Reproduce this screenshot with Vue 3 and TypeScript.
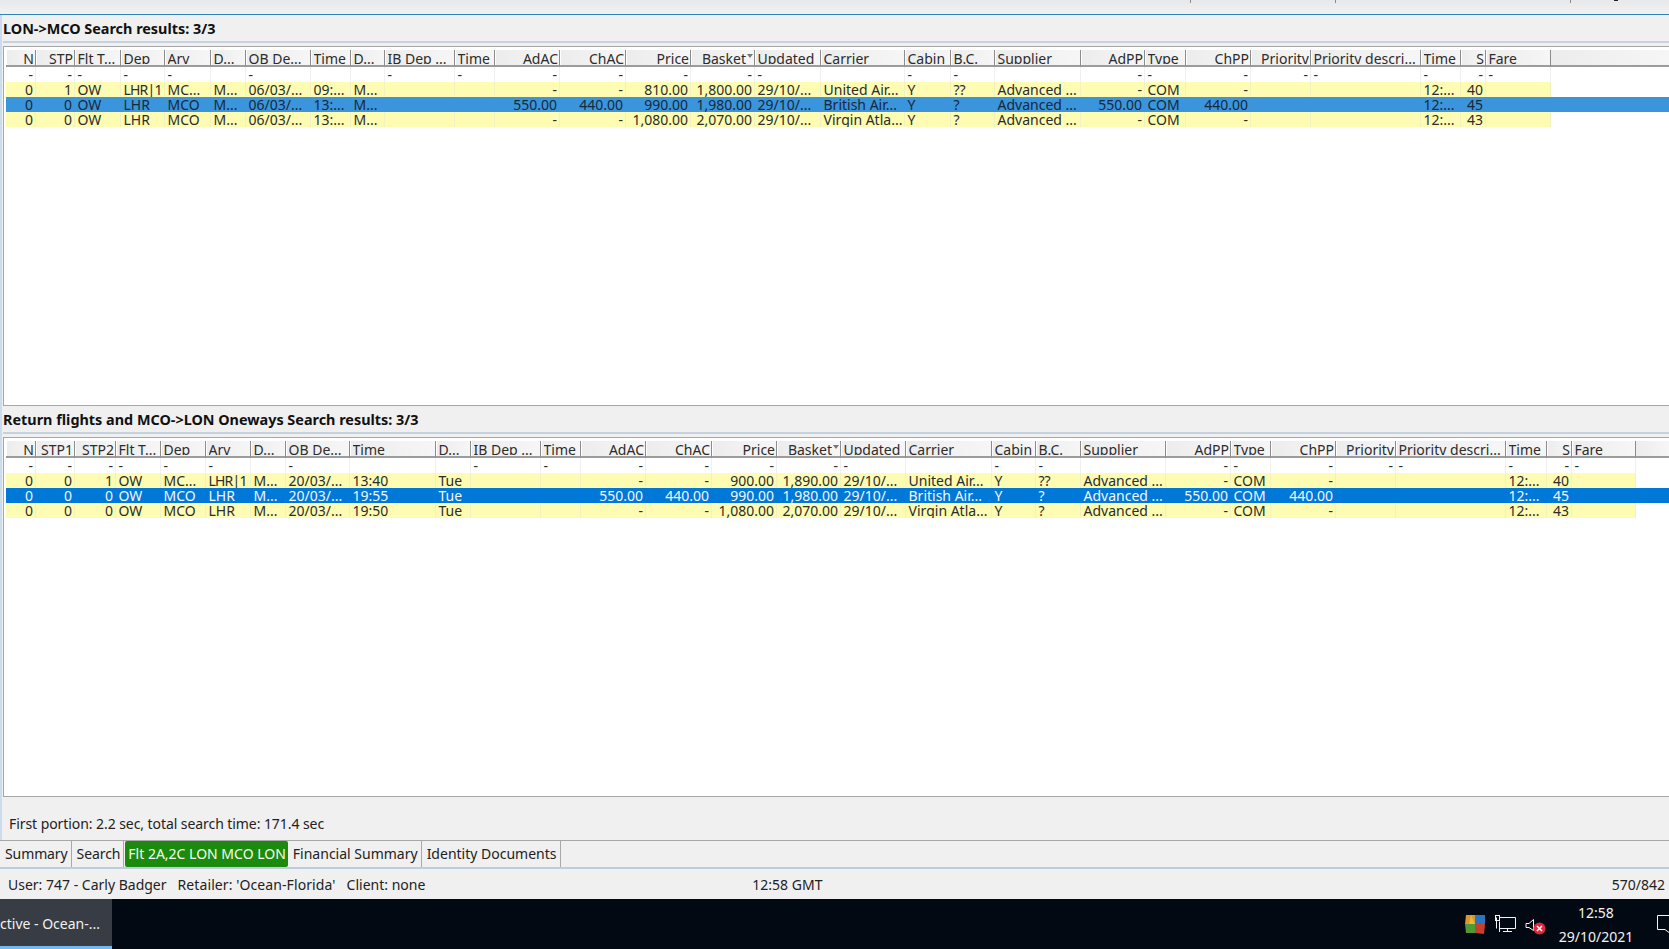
<script setup lang="ts">
type Col = { label: string; right?: boolean; sort?: boolean };

const R = true;
const tailCols: Col[] = [
  { label: 'Flt T...' }, { label: 'Dep' }, { label: 'Arv' }, { label: 'D...' }, { label: 'OB De...' },
  { label: 'Time' }, { label: 'D...' }, { label: 'IB Dep ...' }, { label: 'Time' },
  { label: 'AdAC', right: R }, { label: 'ChAC', right: R }, { label: 'Price', right: R },
  { label: 'Basket', right: R, sort: true }, { label: 'Updated' }, { label: 'Carrier' }, { label: 'Cabin' },
  { label: 'B.C.' }, { label: 'Supplier' }, { label: 'AdPP', right: R }, { label: 'Type' },
  { label: 'ChPP', right: R }, { label: 'Priority', right: R }, { label: 'Priority descri...' },
  { label: 'Time' }, { label: 'S', right: R }, { label: 'Fare' },
];

const filterTail = ['-', '-', '-', '', '-', '', '', '-', '-', '-', '-', '-', '-', '-', '', '-', '-', '', '-', '-', '-', '-', '-', '-', '-', '-'];

function widths(edges: number[]): string {
  return edges.slice(1).map((e, i) => `${e - edges[i]}px`).join(' ') + ' 1fr';
}

const tables = [
  {
    title: 'LON->MCO Search results: 3/3',
    tone: 'inactive',
    tpl: widths([6, 36, 75, 121, 165, 211, 246, 311, 351, 385, 455, 495, 560, 626, 691, 755, 821, 905, 951, 995, 1081, 1145, 1186, 1251, 1311, 1421, 1461, 1486, 1551]),
    cols: [{ label: 'N', right: R }, { label: 'STP', right: R }, ...tailCols] as Col[],
    filter: ['-', '-', ...filterTail],
    selected: 1,
    rows: [
      ['0', '1', 'OW', 'LHR|1', 'MC...', 'M...', '06/03/...', '09:...', 'M...', '', '', '-', '-', '810.00', '1,800.00', '29/10/...', 'United Air...', 'Y', '??', 'Advanced ...', '-', 'COM', '-', '', '', '12:...', '40', ''],
      ['0', '0', 'OW', 'LHR', 'MCO', 'M...', '06/03/...', '13:...', 'M...', '', '', '550.00', '440.00', '990.00', '1,980.00', '29/10/...', 'British Air...', 'Y', '?', 'Advanced ...', '550.00', 'COM', '440.00', '', '', '12:...', '45', ''],
      ['0', '0', 'OW', 'LHR', 'MCO', 'M...', '06/03/...', '13:...', 'M...', '', '', '-', '-', '1,080.00', '2,070.00', '29/10/...', 'Virgin Atla...', 'Y', '?', 'Advanced ...', '-', 'COM', '-', '', '', '12:...', '43', ''],
    ],
  },
  {
    title: 'Return flights and MCO->LON Oneways Search results: 3/3',
    tone: 'active',
    tpl: widths([6, 36, 75, 116, 161, 206, 251, 286, 350, 436, 471, 541, 581, 646, 712, 777, 841, 906, 992, 1036, 1081, 1166, 1231, 1271, 1336, 1396, 1506, 1547, 1572, 1636]),
    cols: [{ label: 'N', right: R }, { label: 'STP1', right: R }, { label: 'STP2', right: R }, ...tailCols] as Col[],
    filter: ['-', '-', '-', ...filterTail],
    selected: 1,
    rows: [
      ['0', '0', '1', 'OW', 'MC...', 'LHR|1', 'M...', '20/03/...', '13:40', 'Tue', '', '', '-', '-', '900.00', '1,890.00', '29/10/...', 'United Air...', 'Y', '??', 'Advanced ...', '-', 'COM', '-', '', '', '12:...', '40', ''],
      ['0', '0', '0', 'OW', 'MCO', 'LHR', 'M...', '20/03/...', '19:55', 'Tue', '', '', '550.00', '440.00', '990.00', '1,980.00', '29/10/...', 'British Air...', 'Y', '?', 'Advanced ...', '550.00', 'COM', '440.00', '', '', '12:...', '45', ''],
      ['0', '0', '0', 'OW', 'MCO', 'LHR', 'M...', '20/03/...', '19:50', 'Tue', '', '', '-', '-', '1,080.00', '2,070.00', '29/10/...', 'Virgin Atla...', 'Y', '?', 'Advanced ...', '-', 'COM', '-', '', '', '12:...', '43', ''],
    ],
  },
];

const tabs = [
  { label: 'Summary' },
  { label: 'Search' },
  { label: 'Flt 2A,2C LON MCO LON', on: true },
  { label: 'Financial Summary' },
  { label: 'Identity Documents' },
];
</script>

<template>
  <div class="page">
    <header class="topbar">
      <i class="tick t1"></i>
      <i class="tick t2"></i>
      <i class="tick t3"></i>
      <i class="tick dark"></i>
    </header>

    <main class="main">
      <section v-for="t in tables" :key="t.title" class="panel">
        <h2 class="heading">{{ t.title }}</h2>
        <div class="rule"></div>
        <div class="box">
          <div class="grid-row head" :style="{ gridTemplateColumns: t.tpl }">
            <div v-for="(c, i) in t.cols" :key="i" class="hcell" :class="{ right: c.right }">
              <div class="hlabel">{{ c.label }}<span v-if="c.sort" class="caret"></span></div>
            </div>
            <div class="hfill"></div>
          </div>
          <div class="grid-row filter" :style="{ gridTemplateColumns: t.tpl }">
            <div v-for="(v, i) in t.filter" :key="i" class="cell" :class="{ right: t.cols[i].right }">{{ v }}</div>
            <div class="fill"></div>
          </div>
          <div
            v-for="(r, ri) in t.rows"
            :key="ri"
            class="grid-row data"
            :class="ri === t.selected ? t.tone : 'plain'"
            :style="{ gridTemplateColumns: t.tpl }"
          >
            <div
              v-for="(v, i) in r"
              :key="i"
              class="cell"
              :class="{ right: t.cols[i].right, tight: v.includes('|') }"
            >{{ v }}</div>
            <div class="fill"></div>
          </div>
        </div>
      </section>

      <p class="timing">First portion: 2.2 sec, total search time: 171.4 sec</p>
    </main>

    <nav class="tabs">
      <div v-for="tab in tabs" :key="tab.label" class="tab" :class="{ on: tab.on }">{{ tab.label }}</div>
    </nav>

    <footer class="status">
      <span class="user">User: 747 - Carly Badger</span>
      <span class="retailer">Retailer: 'Ocean-Florida'</span>
      <span class="client">Client: none</span>
      <span class="gmt">12:58 GMT</span>
      <span class="mem">570/842</span>
    </footer>

    <div class="taskbar">
      <div class="task">ctive - Ocean-...</div>
      <div class="tray">
        <svg class="ti" width="20" height="20" viewBox="0 0 20 20">
          <path d="M1 1h9v9H0z" fill="#d8982c" />
          <path d="M10 1h10v9H10z" fill="#2c74c0" />
          <path d="M0 10h10v9H1z" fill="#4e9a34" />
          <path d="M10 10h10l-1 10-9-1z" fill="#c8402c" />
          <path d="M6 1l4 9-6 0z" fill="#e8b840" />
        </svg>
        <svg class="ti net" width="21" height="18" viewBox="0 0 21 18" fill="none" stroke="#f4f4f4" stroke-width="1">
          <path d="M4.5 2.5h16v11h-16M4.5 6.5v10.500M1.500 2.500v11M12.500 13.500v3M8 16.500h9" />
          <rect x="0.500" y="0.500" width="4" height="5" />
        </svg>
        <svg class="ti vol" width="21" height="18" viewBox="0 0 21 18">
          <path d="M1 6.500h3L8.500 2.500v11L4 10.500H1z" fill="none" stroke="#f4f4f4" stroke-width="1" />
          <circle cx="14.500" cy="11.500" r="6" fill="#dc2a3c" />
          <path d="M12 9l5 5M17 9l-5 5" stroke="#fff" stroke-width="1.500" />
        </svg>
        <div class="clock">
          <span>12:58</span>
          <span>29/10/2021</span>
        </div>
        <svg class="ti note" width="12" height="20" viewBox="0 0 12 20" fill="none" stroke="#f4f4f4" stroke-width="1">
          <path d="M12 1.500H0.500v14H8l4 3" />
        </svg>
      </div>
    </div>
  </div>
</template>

<style scoped>
.page {
  width: 1669px;
  height: 949px;
  display: flex;
  flex-direction: column;
  overflow: hidden;
  background: #f0f0f0;
  color: #222;
  font: 14px/15px "Noto Sans", "Open Sans", sans-serif;
}

.topbar {
  flex: none;
  height: 14px;
  display: flex;
  align-items: flex-start;
  background: linear-gradient(#e6e8ea, #f2f2f2);
  border-bottom: 1px solid #2f83bd;
}
.tick { display: block; width: 1px; height: 3px; background: #8a8a8a; }
.t1 { margin-left: 1190px; }
.t2 { margin-left: 144px; }
.t3 { margin-left: 234px; }
.dark { width: 4px; height: 1px; margin-left: 43px; background: #222; }

.main {
  flex: 1;
  min-height: 0;
  display: flex;
  flex-direction: column;
  border-left: 2px solid #cbdcee;
  padding-left: 1px;
}

.panel { display: flex; flex-direction: column; flex: none; height: 391px; }

.heading {
  flex: none;
  height: 26px;
  margin: 0;
  font-size: 14.4px;
  font-weight: 700;
  line-height: 28px;
  color: #111;
  white-space: nowrap;
}
.rule { flex: none; height: 2px; background: #c6d2de; }
.box {
  flex: 1;
  min-height: 0;
  margin-top: 3px;
  padding: 3px 0 0 2px;
  background: #fff;
  border: 1px solid #a6a6a6;
  border-width: 1px 0 1px 1px;
  overflow: hidden;
}

.grid-row { display: grid; width: 1663px; }
.head { height: 17px; }
.hcell, .hfill {
  height: 17px;
  background: linear-gradient(90deg, #ececec, #f6f6f6);
  border-bottom: 2px solid #9c9c9c;
  box-sizing: border-box;
}
.hcell {
  padding: 0 1px 0 2.5px;
  border-right: 1px solid #8c8c8c;
  box-shadow: inset 1px 0 0 #fff;
  color: #2c2c2c;
}
.hlabel {
  height: 14px;
  overflow: hidden;
  white-space: nowrap;
  line-height: 18px;
}
.hcell.right { text-align: right; }
.caret {
  display: inline-block;
  width: 0;
  height: 0;
  margin-left: 1px;
  vertical-align: 6px;
  border: 3px solid transparent;
  border-top: 4px solid #777;
  border-bottom: 0;
}

.filter { height: 15px; background: #fff; }
.data { height: 15px; }
.cell {
  height: 15px;
  padding: 0 2px 0 2.5px;
  box-sizing: border-box;
  border-right: 1px solid #f0f0f0;
  overflow: hidden;
  white-space: nowrap;
  line-height: 15px;
  color: #2c2c2c;
}
.cell.right { text-align: right; }
.cell.tight { letter-spacing: -0.8px; }
.plain .cell { background: #fdfcb2; border-right-color: #f2f1c0; }
.inactive { background: #3b95dc; }
.inactive .cell { border-right-color: transparent; color: #17283a; }
.active { background: #0078d7; }
.active .cell { border-right-color: transparent; color: #f2f6fa; }

.timing {
  margin: 0;
  padding: 19px 0 0 6px;
  line-height: 15px;
  letter-spacing: -0.07px;
  white-space: nowrap;
}

.tabs {
  flex: none;
  height: 26px;
  display: flex;
  border-top: 1px solid #a8a8a8;
  border-bottom: 2px solid #bccde0;
  background: #f0f0f0;
}
.tab {
  padding: 0 3px 0 5px;
  border-right: 1px solid #a8a8a8;
  line-height: 25px;
  white-space: nowrap;
}
.tab:nth-child(-n+2) { letter-spacing: -0.1px; }
.tab.on {
  background: #1c8a0c;
  color: #f4fff0;
  border-right: 0;
  border-radius: 2px;
  margin-left: 1px;
  padding: 0 2px 0 3px;
}

.status {
  flex: none;
  height: 30px;
  display: flex;
  align-items: center;
  padding-left: 8px;
  white-space: nowrap;
}
.retailer { margin-left: 11px; letter-spacing: 0.09px; }
.client { margin-left: 11px; }
.gmt { margin-left: 327px; }
.mem { margin-left: auto; margin-right: 4px; }

.taskbar {
  flex: none;
  height: 50px;
  display: flex;
  align-items: stretch;
  background: #020912;
  color: #f2f2f2;
}
.task {
  width: 112px;
  box-sizing: border-box;
  background: #383c44;
  border-bottom: 3px solid #76b9ed;
  line-height: 50px;
  white-space: nowrap;
  overflow: hidden;
}
.tray {
  flex: 1;
  display: flex;
  align-items: center;
  justify-content: flex-end;
  overflow: hidden;
}
.ti { flex: none; display: block; }
.net { margin-left: 10px; }
.vol { margin-left: 9px; margin-top: 4px; }
.clock {
  width: 96px;
  margin-left: 2px;
  display: flex;
  flex-direction: column;
  align-items: center;
  gap: 9px;
  line-height: 15px;
}
.note { margin-left: 13px; }
</style>

<style>
html, body { background: #f0f0f0; }
</style>
